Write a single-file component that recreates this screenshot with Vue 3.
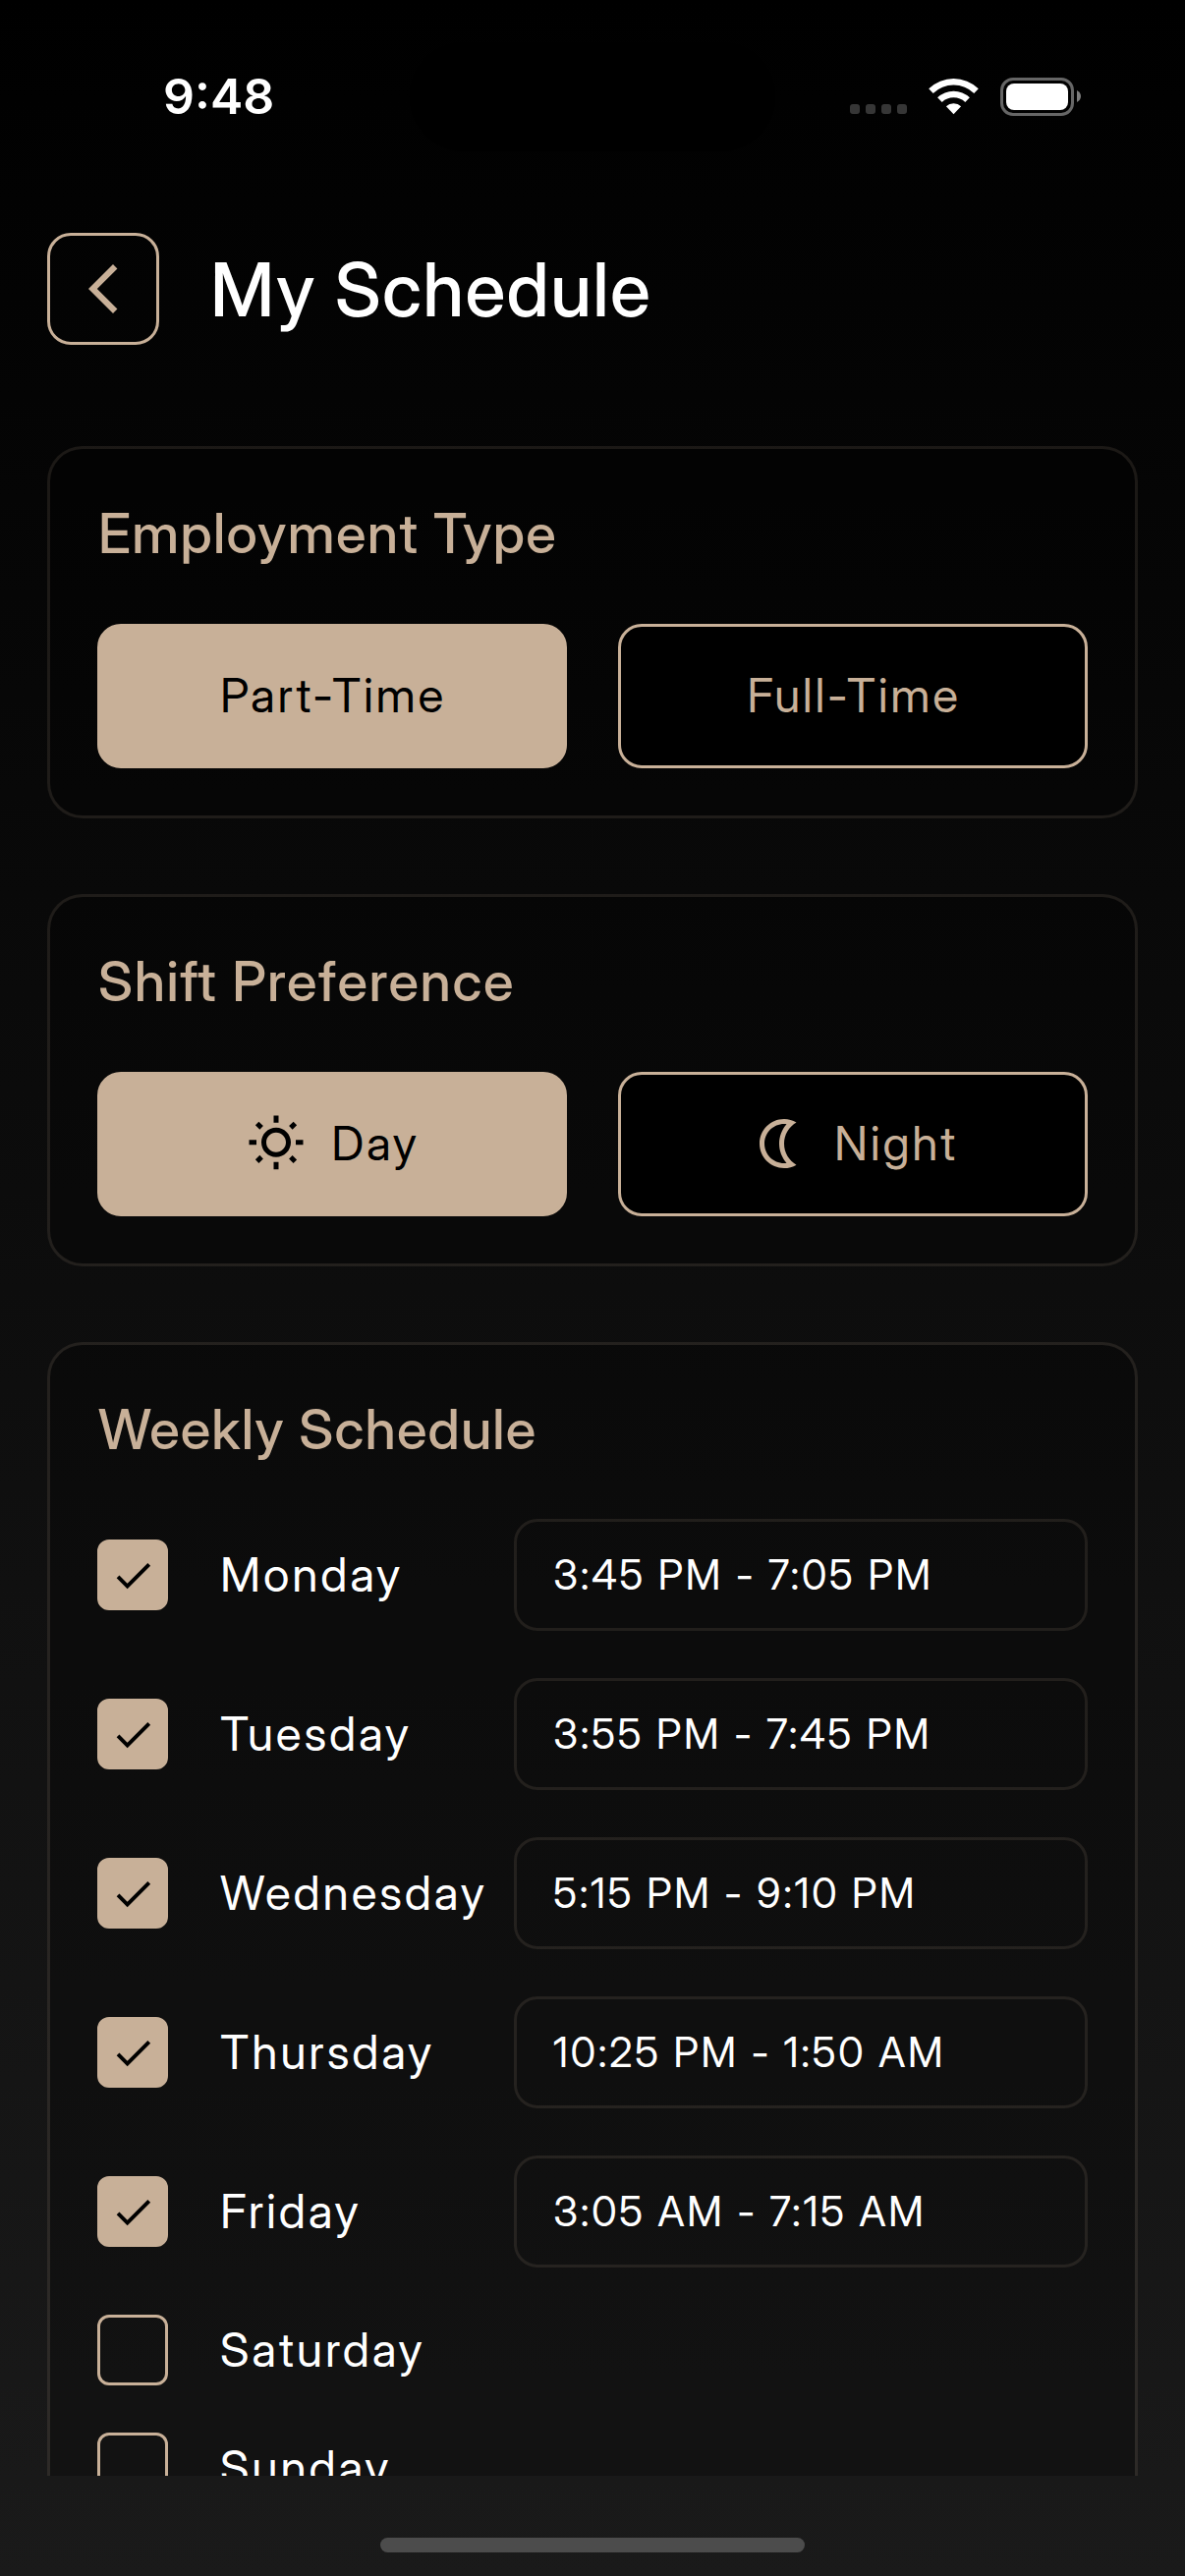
<script setup>
import { ref } from 'vue'

const employment = ref('Part-Time')
const shift = ref('Day')
const employmentTypes = ['Part-Time', 'Full-Time']
const shifts = ['Day', 'Night']

const days = ref([
  { name: 'Monday', on: true, time: '3:45 PM - 7:05 PM' },
  { name: 'Tuesday', on: true, time: '3:55 PM - 7:45 PM' },
  { name: 'Wednesday', on: true, time: '5:15 PM - 9:10 PM' },
  { name: 'Thursday', on: true, time: '10:25 PM - 1:50 AM' },
  { name: 'Friday', on: true, time: '3:05 AM - 7:15 AM' },
  { name: 'Saturday', on: false },
  { name: 'Sunday', on: false }
])
</script>

<template>
  <div class="screen">
    <div class="status">
      <span class="clock">9:48</span>
      <span class="island"></span>
      <div class="indicators">
        <div class="signal"><i></i><i></i><i></i><i></i></div>
        <svg class="wifi" width="51" height="38" viewBox="0 0 51 38">
          <path d="M0.2 11.2 A36.5 36.5 0 0 1 50.8 11.2 L46.3 15.9 A30 30 0 0 0 4.7 15.9 Z" />
          <path d="M9.1 20.3 A23.8 23.8 0 0 1 41.9 20.3 L37.3 24.9 A17.3 17.3 0 0 0 13.7 24.9 Z" />
          <path d="M17.9 29.3 A11 11 0 0 1 33.1 29.3 L25.5 37.3 Z" />
        </svg>
        <div class="battery"><div class="level"></div></div>
        <svg width="4" height="12" viewBox="0 0 4 12"><path d="M0 0 Q4 2.200 4 6 Q4 9.800 0 12Z" fill="#7d7d7d" /></svg>
      </div>
    </div>

    <header class="header">
      <button class="back" aria-label="Back">
        <svg width="60" height="60" viewBox="0 0 24 24"><path d="M17.77 3.77 16 2 6 12l10 10 1.77-1.77L9.54 12z" /></svg>
      </button>
      <h1>My Schedule</h1>
    </header>

    <main class="content">
      <section class="card">
        <h2>Employment Type</h2>
        <div class="options">
          <button
            v-for="type in employmentTypes"
            :key="type"
            class="option"
            :class="{ selected: employment === type }"
            @click="employment = type"
          >{{ type }}</button>
        </div>
      </section>

      <section class="card">
        <h2 class="shift-title">Shift Preference</h2>
        <div class="options">
          <button
            v-for="s in shifts"
            :key="s"
            class="option"
            :class="{ selected: shift === s }"
            @click="shift = s"
          >
            <svg width="60" height="60" viewBox="0 0 24 24">
              <path
                v-if="s === 'Day'"
                d="m6.76 4.84-1.8-1.79-1.41 1.41 1.79 1.79 1.42-1.41zM4 10.5H1v2h3v-2zm9-9.95h-2V3.5h2V.55zm7.45 3.91-1.41-1.41-1.79 1.79 1.41 1.41 1.79-1.79zm-3.21 13.7 1.79 1.8 1.41-1.41-1.8-1.79-1.4 1.4zM20 10.5v2h3v-2h-3zm-8-5c-3.31 0-6 2.69-6 6s2.69 6 6 6 6-2.69 6-6-2.69-6-6-6zm0 10c-2.21 0-4-1.79-4-4s1.79-4 4-4 4 1.79 4 4-1.79 4-4 4zm-1 6.95h2V19.5h-2v2.95zm-7.45-3.91 1.41 1.41 1.79-1.8-1.41-1.41-1.79 1.8z"
              />
              <path
                v-else
                d="M14 4c.34 0 .68.02 1.01.07C13.1 6.23 12 9.05 12 12s1.1 5.77 3.01 7.93c-.33.05-.67.07-1.01.07-4.41 0-8-3.59-8-8s3.59-8 8-8m0-2C8.48 2 4 6.48 4 12s4.48 10 10 10c1.82 0 3.53-.5 5-1.35-2.99-1.73-5-4.95-5-8.65s2.01-6.92 5-8.65C17.53 2.5 15.82 2 14 2z"
              />
            </svg>
            <span>{{ s }}</span>
          </button>
        </div>
      </section>

      <section class="card">
        <h2 class="week-title">Weekly Schedule</h2>
        <div class="days">
          <div v-for="day in days" :key="day.name" class="day">
            <span class="box" :class="{ checked: day.on }">
              <svg v-if="day.on" width="47" height="47" viewBox="0 0 24 24"><path d="M9 16.17 4.83 12l-1.42 1.41L9 19 21 7l-1.41-1.41z" /></svg>
            </span>
            <span class="name">{{ day.name }}</span>
            <span v-if="day.on" class="time">{{ day.time }}</span>
          </div>
        </div>
      </section>
    </main>

    <footer class="home"><span></span></footer>
  </div>
</template>

<style>
body {
  background: #1a1a1a;
}
</style>

<style scoped>
.screen {
  display: flex;
  flex-direction: column;
  width: 1206px;
  height: 2622px;
  overflow: hidden;
  box-sizing: border-box;
  background: linear-gradient(180deg, #000 0%, #1a1a1a 100%);
  font-family: "Inter Display", Inter, sans-serif;
  color: #fff;
}
.status {
  display: flex;
  align-items: center;
  flex: none;
  height: 196px;
  box-sizing: border-box;
}
.clock {
  width: 251px;
  padding-left: 166px;
  font-family: Inter, sans-serif;
  font-size: 50px;
  font-weight: 600;
  line-height: 60px;
}
.island {
  width: 372px;
  height: 111px;
  border-radius: 56px;
  background: #000;
}
.indicators {
  display: flex;
  align-items: center;
  margin-left: 76px;
}
.signal {
  display: flex;
  gap: 6px;
  margin: 26px 22px 0 0;
}
.signal i {
  width: 10px;
  height: 10px;
  border-radius: 3px;
  background: #363636;
}
.wifi {
  fill: #fff;
  margin-right: 22px;
}
.battery {
  width: 75px;
  height: 39px;
  box-sizing: border-box;
  padding: 3px;
  border: 3px solid #666;
  border-radius: 13px;
  margin-right: 3px;
}
.level {
  height: 27px;
  border-radius: 8px;
  background: #fff;
}
.header {
  display: flex;
  align-items: center;
  flex: none;
  height: 114px;
  margin: 41px 48px 0;
  gap: 52px;
}
button {
  font: inherit;
  color: inherit;
  background: none;
  border: 3px solid #c8b098;
  padding: 0;
  box-sizing: border-box;
}
.back {
  display: flex;
  align-items: center;
  justify-content: center;
  width: 114px;
  height: 114px;
  border-radius: 24px;
}
.back svg,
.option svg {
  fill: currentColor;
}
.back svg {
  color: #c8b098;
}
h1 {
  margin: 0;
  padding-top: 2px;
  font-size: 75px;
  font-weight: 500;
  line-height: 90px;
  letter-spacing: 1.25px;
}
.content {
  display: flex;
  flex-direction: column;
  gap: 77px;
  flex: none;
  height: 2066px;
  margin-top: 103px;
  padding: 0 48px;
  overflow: hidden;
}
.card {
  flex: none;
  box-sizing: border-box;
  padding: 48px;
  border: 3px solid rgba(200, 176, 152, 0.12);
  border-radius: 36px;
  background: rgba(0, 0, 0, 0.25);
  background-clip: padding-box;
}
h2 {
  margin: 0 0 52px;
  padding-left: 1px;
  font-size: 56px;
  font-weight: 500;
  line-height: 77px;
  letter-spacing: 1.3px;
  color: #c8b098;
}
.shift-title {
  letter-spacing: 1.55px;
}
.week-title {
  letter-spacing: 1.1px;
}
.options {
  display: flex;
  gap: 52px;
  padding-top: 1px;
}
.option {
  display: flex;
  flex: 1 1 0;
  align-items: center;
  justify-content: center;
  gap: 26px;
  height: 147px;
  padding: 0 0 2px 2px;
  border-radius: 24px;
  background: #000;
  color: #c8b098;
  font-size: 48px;
  line-height: 60px;
  letter-spacing: 2.7px;
}
.option.selected {
  background: #c8b098;
  color: #000;
}
.days {
  display: flex;
  flex-direction: column;
  gap: 48px;
}
.day {
  display: flex;
  align-items: center;
}
.box {
  display: flex;
  align-items: center;
  justify-content: center;
  flex: none;
  width: 72px;
  height: 72px;
  box-sizing: border-box;
  border: 3px solid #c8b098;
  border-radius: 12px;
}
.box.checked {
  background: #c8b098;
}
.name {
  flex: none;
  width: 352px;
  padding-left: 53px;
  box-sizing: border-box;
  font-size: 48px;
  line-height: 60px;
  letter-spacing: 2.85px;
}
.time {
  flex: 1;
  height: 114px;
  box-sizing: border-box;
  padding: 0 37px;
  border: 3px solid rgba(200, 176, 152, 0.12);
  border-radius: 24px;
  font-size: 42px;
  line-height: 108px;
  letter-spacing: 2.3px;
  white-space: nowrap;
}
.home {
  display: flex;
  justify-content: center;
  padding-top: 63px;
}
.home span {
  width: 432px;
  height: 15px;
  border-radius: 8px;
  background: #4c4c4c;
}
</style>
